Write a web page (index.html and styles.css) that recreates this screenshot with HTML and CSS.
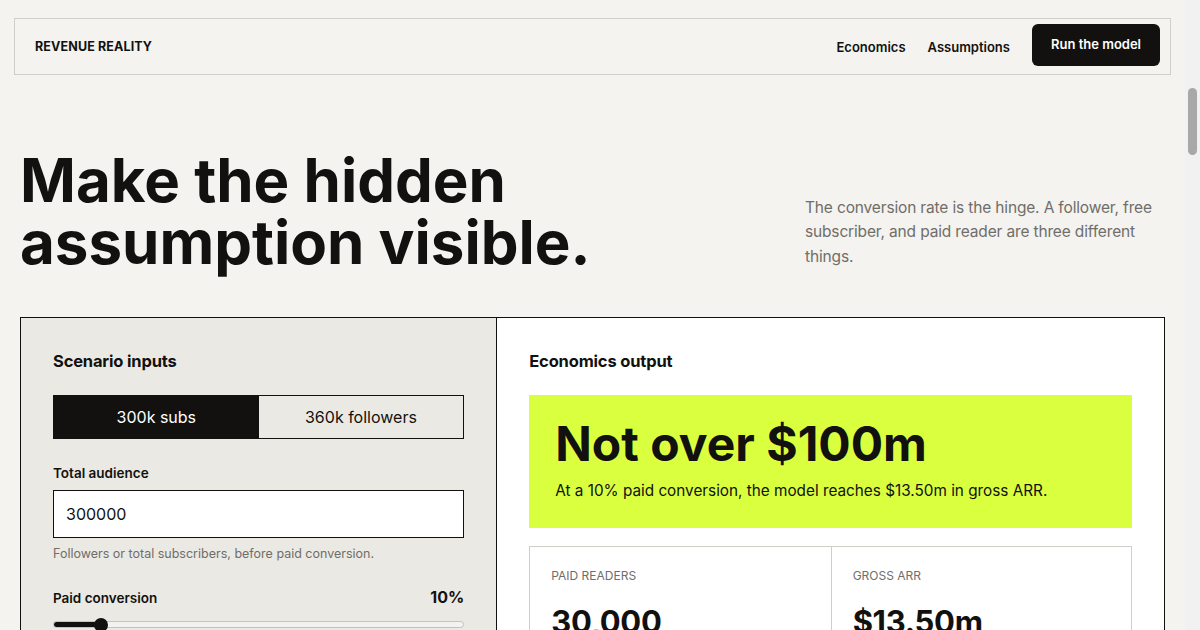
FILE: index.html
```html
<!DOCTYPE html>
<html lang="en">
<head>
    <meta charset="UTF-8">
    <meta name="viewport" content="width=device-width, initial-scale=1.0">
    <title>Revenue Reality</title>
    <link rel="stylesheet" href="styles.css">
</head>
<body>
    <header class="topbar">
        <div class="brand">REVENUE REALITY</div>
        <nav class="nav">
            <a href="#economics">Economics</a>
            <a href="#assumptions">Assumptions</a>
            <button class="run-btn">Run the model</button>
        </nav>
    </header>

    <section class="hero">
        <h1>Make the hidden<br>assumption visible.</h1>
        <p>The conversion rate is the hinge. A follower, free subscriber, and paid reader are three different things.</p>
    </section>

    <main class="model">
        <!-- inputs -->
        <section class="inputs" id="assumptions">
            <h2>Scenario inputs</h2>

            <div class="segmented">
                <button class="active">300k subs</button>
                <button>360k followers</button>
            </div>

            <div class="field">
                <label for="audience">Total audience</label>
                <input type="text" id="audience" value="300000">
                <small>Followers or total subscribers, before paid conversion.</small>
            </div>

            <div class="field">
                <div class="field-head">
                    <label for="conversion">Paid conversion</label>
                    <span class="field-value">10%</span>
                </div>
                <input type="range" id="conversion" min="0" max="100" value="10" class="range" style="--fill: 10%">
            </div>
        </section>

        <!-- outputs -->
        <section class="outputs" id="economics">
            <h2>Economics output</h2>

            <div class="verdict">
                <div class="verdict-title">Not over $100m</div>
                <p>At a 10% paid conversion, the model reaches $13.50m in gross ARR.</p>
            </div>

            <div class="stats">
                <div class="stat">
                    <div class="stat-label">Paid readers</div>
                    <div class="stat-value">30,000</div>
                </div>
                <div class="stat">
                    <div class="stat-label">Gross ARR</div>
                    <div class="stat-value">$13.50m</div>
                </div>
            </div>
        </section>
    </main>

    <div class="scrollbar"><span></span></div>
</body>
</html>
```

FILE: styles.css
```css
:root {
    --ink: #12110f;
    --bg: #f4f3ef;
    --panel: #ebe9e4;
    --line: #cfcec9;
    --muted: #6f6e69;
    --lime: #daff3f;
}

* {
    box-sizing: border-box;
    margin: 0;
    padding: 0;
}

body {
    font-family: Inter, "Liberation Sans", sans-serif;
    background: var(--bg);
    color: var(--ink);
    padding: 18px 29px 60px 14px;
    min-height: 1400px;
}

/* fake window scrollbar, page is longer than the frame */
.scrollbar {
    position: fixed;
    top: 0;
    right: 0;
    width: 15px;
    height: 100%;
    background: #f1f1f1;
}

.scrollbar span {
    position: absolute;
    top: 88px;
    left: 3px;
    width: 9px;
    height: 67px;
    border-radius: 5px;
    background: #a8a8a8;
}

/* top bar */
.topbar {
    display: flex;
    justify-content: space-between;
    align-items: center;
    height: 57px;
    border: 1px solid var(--line);
    padding: 0 10px 0 20px;
}

.brand {
    font-size: 12.5px;
    font-weight: 700;
    letter-spacing: 0.01em;
}

.nav {
    display: flex;
    align-items: center;
}

.nav a {
    color: var(--ink);
    text-decoration: none;
    font-size: 13px;
    font-weight: 600;
    margin-right: 22px;
}

.run-btn {
    font-family: inherit;
    background: var(--ink);
    color: #fff;
    border: none;
    border-radius: 6px;
    height: 42px;
    padding: 0 19px 3px;
    font-size: 13px;
    font-weight: 600;
    margin-top: -3px;
}

/* hero */
.hero {
    display: flex;
    justify-content: space-between;
    align-items: flex-end;
    padding: 74px 6px 0;
}

.hero h1 {
    font-size: 60px;
    font-weight: 700;
    line-height: 62px;
    letter-spacing: 0;
}

.hero p {
    max-width: 360px;
    font-size: 15.5px;
    line-height: 24.5px;
    letter-spacing: -0.01em;
    color: var(--muted);
    margin-bottom: 4px;
}

/* model grid */
.model {
    display: grid;
    grid-template-columns: 5fr 7fr;
    border: 1px solid var(--ink);
    margin: 44px 6px 0;
}

.model h2 {
    font-size: 16.5px;
    font-weight: 700;
    letter-spacing: -0.01em;
    margin-bottom: 24px;
}

.inputs {
    background: var(--panel);
    border-right: 1px solid var(--ink);
    padding: 33px 32px 40px;
}

.outputs {
    background: #fff;
    padding: 33px 32px 40px;
}

.segmented {
    display: grid;
    grid-template-columns: 1fr 1fr;
    border: 1px solid var(--ink);
    height: 44px;
    margin-bottom: 26px;
}

.segmented button {
    font-family: inherit;
    font-size: 16px;
    border: none;
    background: transparent;
    color: var(--ink);
}

.segmented button.active {
    background: var(--ink);
    color: #fff;
}

.field {
    margin-bottom: 26px;
}

.field label {
    display: block;
    font-size: 13.5px;
    font-weight: 600;
    margin-bottom: 9px;
}

.field input[type="text"] {
    width: 100%;
    height: 48px;
    border: 1.5px solid var(--ink);
    background: #fff;
    font-family: inherit;
    font-size: 16px;
    padding: 0 12px;
    color: var(--ink);
}

.field small {
    display: block;
    font-size: 12.5px;
    color: var(--muted);
    margin-top: 8px;
}

.field-head {
    display: flex;
    justify-content: space-between;
    align-items: baseline;
}

.field-value {
    font-size: 16px;
    font-weight: 700;
}

.range {
    -webkit-appearance: none;
    appearance: none;
    display: block;
    width: 100%;
    height: 7px;
    border-radius: 4px;
    border: 1px solid #c4c3be;
    background: linear-gradient(to right, var(--ink) var(--fill), #f3f2ee var(--fill));
    margin-top: 6px;
}

.range::-webkit-slider-thumb {
    -webkit-appearance: none;
    width: 14px;
    height: 14px;
    border-radius: 50%;
    background: var(--ink);
}

/* verdict */
.verdict {
    background: var(--lime);
    padding: 23px 26px 28px;
}

.verdict-title {
    font-size: 48px;
    font-weight: 700;
    letter-spacing: 0;
    line-height: 1.08;
    margin-bottom: 11px;
}

.verdict p {
    font-size: 15.3px;
}

.stats {
    display: grid;
    grid-template-columns: 1fr 1fr;
    border: 1px solid var(--line);
    margin-top: 18px;
}

.stat {
    padding: 21px 21px 24px;
}

.stat + .stat {
    border-left: 1px solid var(--line);
}

.stat-label {
    font-size: 12px;
    text-transform: uppercase;
    color: var(--muted);
    margin-bottom: 20px;
}

.stat-value {
    font-size: 31px;
    font-weight: 700;
    letter-spacing: -0.01em;
}
```
